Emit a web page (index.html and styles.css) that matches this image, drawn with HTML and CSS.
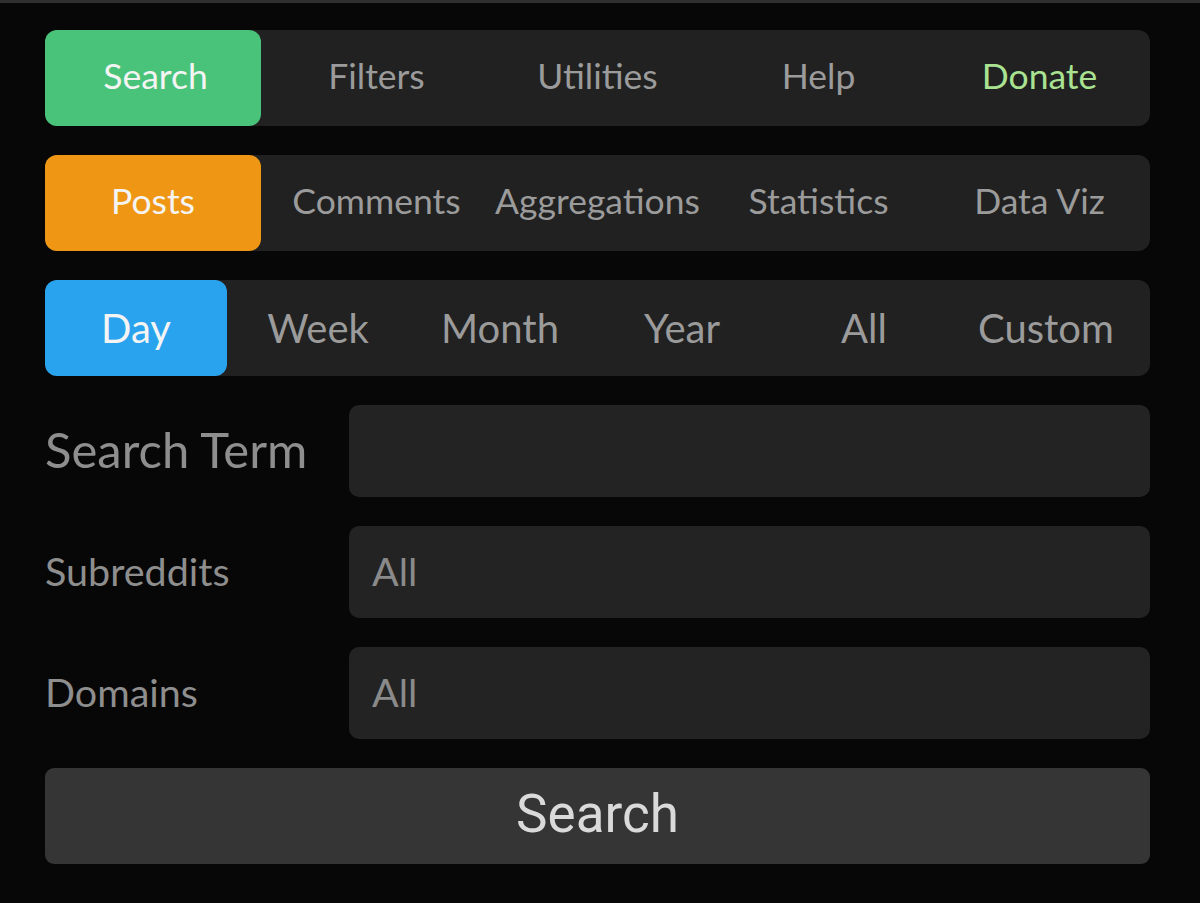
FILE: index.html
```html
<!DOCTYPE html>
<html>
<head>
<meta charset="utf-8">
<link rel="stylesheet" href="styles.css">
</head>
<body>
<div class="topline"></div>
<main class="panel">
  <nav class="tabs five">
    <div class="tab active green">Search</div>
    <div class="tab">Filters</div>
    <div class="tab">Utilities</div>
    <div class="tab">Help</div>
    <div class="tab donate">Donate</div>
  </nav>
  <nav class="tabs five">
    <div class="tab active orange">Posts</div>
    <div class="tab">Comments</div>
    <div class="tab">Aggregations</div>
    <div class="tab">Statistics</div>
    <div class="tab">Data Viz</div>
  </nav>
  <nav class="tabs six">
    <div class="tab active blue">Day</div>
    <div class="tab">Week</div>
    <div class="tab">Month</div>
    <div class="tab">Year</div>
    <div class="tab">All</div>
    <div class="tab">Custom</div>
  </nav>
  <div class="field">
    <label class="label big">Search Term</label>
    <div class="input"></div>
  </div>
  <div class="field">
    <label class="label">Subreddits</label>
    <div class="input">All</div>
  </div>
  <div class="field">
    <label class="label">Domains</label>
    <div class="input">All</div>
  </div>
  <button class="submit">Search</button>
</main>
</body>
</html>
```

FILE: styles.css
```css
html, body {
  margin: 0;
  padding: 0;
  background: #070707;
  height: 100%;
}
body {
  font-family: Lato, "Liberation Sans", sans-serif;
}
.topline {
  height: 3px;
  background: #2f2f2f;
}
.panel {
  width: 1105px;
  margin-left: 45px;
  padding-top: 27px;
  display: flex;
  flex-direction: column;
  gap: 29px;
}
.tabs {
  display: grid;
  height: 96px;
  background: #212121;
  border-radius: 12px;
}
.tabs.five {
  grid-template-columns: repeat(5, 1fr);
  font-size: 35.5px;
}
.tabs.five .tab {
  padding-bottom: 5px;
}
.tabs.six {
  grid-template-columns: repeat(6, 182px);
  font-size: 40px;
}
.tab {
  display: flex;
  align-items: center;
  justify-content: center;
  color: #9b9b9b;
  border-radius: 12px;
  white-space: nowrap;
}
.tab.active {
  color: #f4f4f4;
}
.tab.green { background: #49c379; margin-right: 5px; padding-left: 5px; }
.tab.orange { background: #ef9715; margin-right: 5px; }
.tab.blue { background: #2aa3ef; }
.tab.donate { color: #a9e391; }
.field {
  display: flex;
  align-items: center;
  height: 92px;
}
.label {
  width: 304px;
  font-size: 39.5px;
  color: #8e8e8e;
  white-space: nowrap;
  padding-bottom: 3px;
}
.label.big {
  font-size: 49px;
  padding-bottom: 4px;
}
.input {
  flex: 1;
  height: 92px;
  background: #232323;
  border-radius: 10px;
  display: flex;
  align-items: center;
  padding-left: 23px;
  padding-bottom: 3px;
  box-sizing: border-box;
  font-size: 39.5px;
  color: #8a8a8a;
}
.submit {
  height: 96px;
  border: none;
  border-radius: 9px;
  background: #353535;
  color: #dadada;
  font-family: Roboto, "Liberation Sans", sans-serif;
  font-size: 53px;
  padding: 0 0 4px 0;
  cursor: pointer;
}
```
